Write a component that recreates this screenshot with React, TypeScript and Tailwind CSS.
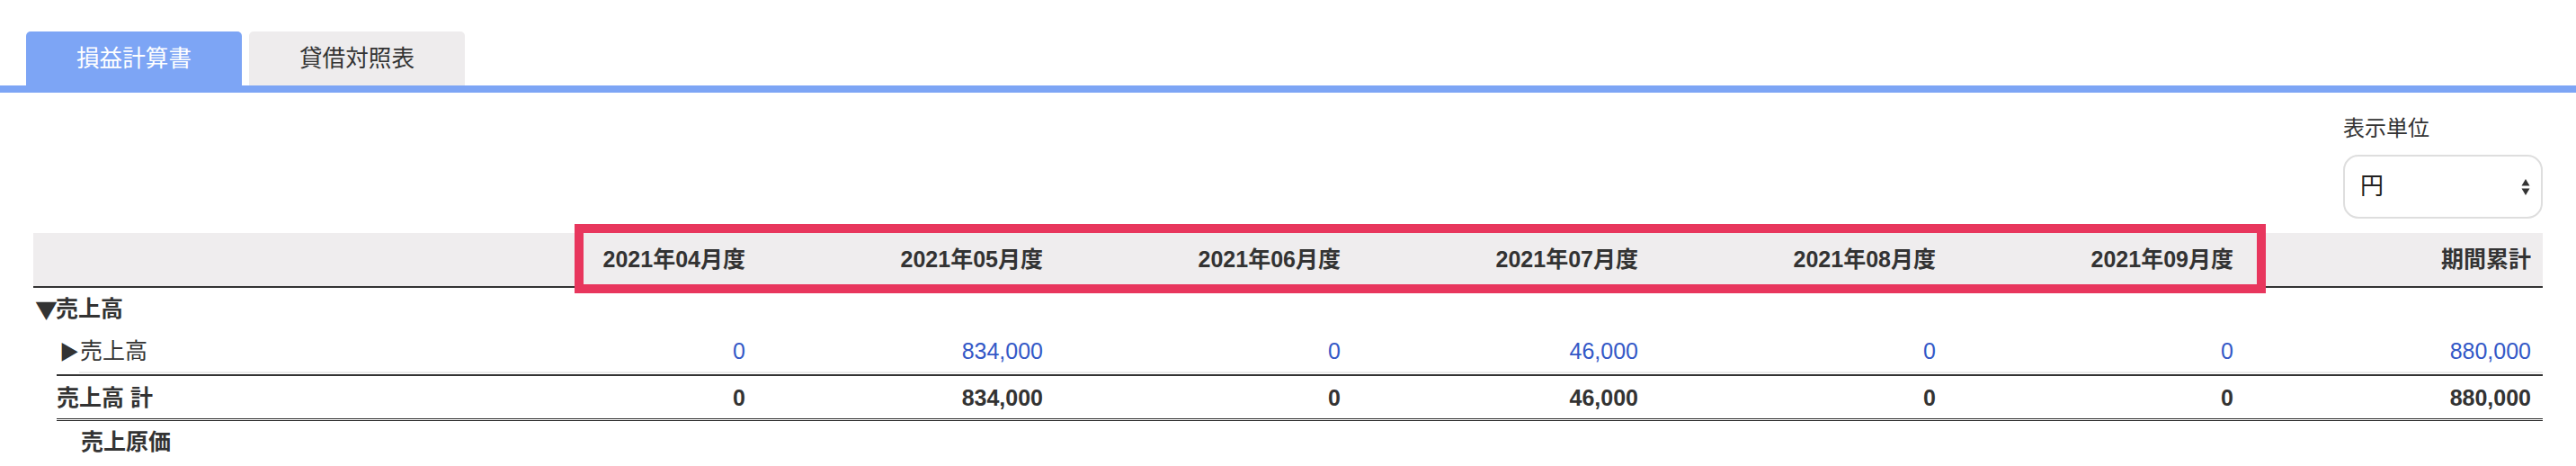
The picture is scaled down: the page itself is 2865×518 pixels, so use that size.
const months = ["2021年04月度", "2021年05月度", "2021年06月度", "2021年07月度", "2021年08月度", "2021年09月度"];
const sales = ["0", "834,000", "0", "46,000", "0", "0", "880,000"];

const font = "font-['Liberation_Sans','Noto_Sans_CJK_JP',sans-serif]";
const cjk = "font-['Noto_Sans_CJK_JP',sans-serif]";

function Cells({ values, className }: { values: string[]; className: string }) {
  return (
    <>
      {values.map((v, i) => (
        <div key={i} className={`pr-[13px] text-right ${className}`}>
          {v}
        </div>
      ))}
    </>
  );
}

function UnitSelect() {
  return (
    <div className="w-[222px]">
      <p className="text-[24px] leading-[30px] text-[#333]">表示単位</p>
      <div className="mt-[14px] flex h-[71px] items-center justify-between rounded-[17px] border-2 border-[#dedede] bg-white pl-[17px] pr-[12px]">
        <span className="text-[26px] text-[#222]">円</span>
        <svg width="10" height="20" viewBox="0 0 10 20" className="text-[#333]">
          <path d="M5 1 L9.5 8.5 H0.5 Z" fill="currentColor" />
          <path d="M5 19 L9.5 11.5 H0.5 Z" fill="currentColor" />
        </svg>
      </div>
    </div>
  );
}

export default function App() {
  return (
    <div className={`h-[518px] w-[2865px] overflow-hidden bg-white ${font}`}>
      {/* tabs */}
      <div className="flex gap-2 pl-[29px] pt-[35px]">
        <div className="flex h-[60px] w-[240px] items-center justify-center rounded-t-[5px] bg-[#7da5f5] text-[25.6px] text-white">
          損益計算書
        </div>
        <div className="flex h-[60px] w-[240px] items-center justify-center rounded-t-[5px] bg-[#eeeced] text-[25.6px] text-[#333]">
          貸借対照表
        </div>
      </div>
      <div className="h-2 bg-[#7da5f5]" />

      <div className="px-[37px]">
        <div className="mt-[25px] flex justify-end">
          <UnitSelect />
        </div>

        <div className="relative mt-4 text-[25px] text-[#333]">
          {/* header */}
          <div className="grid h-[61px] grid-cols-[474px_repeat(7,331px)] items-center border-b-2 border-[#333] bg-[#efedee] font-bold">
            <div />
            <Cells values={[...months, "期間累計"]} className="" />
          </div>
          {/* highlight frame */}
          <div className="pointer-events-none absolute left-[602px] top-[-10px] h-[77px] w-[1881px] border-[10px] border-[#e8365d]" />

          {/* 売上高 section */}
          <div className="flex h-[48px] items-center pl-[2px] font-bold">
            <span className={`${cjk} -mr-[2px]`}>▼</span>売上高
          </div>

          <div className="ml-[26px] grid h-[45px] grid-cols-[448px_repeat(7,331px)] items-center">
            <div className="pl-[3px]">
              <span className={`${cjk} inline-block w-[23px] text-[22px]`}>▶</span>売上高
            </div>
            <Cells values={sales} className="text-[#3358c7]" />
          </div>
          <div className="ml-[51px] h-[2px] bg-[#ebebeb]" />

          <div className="ml-[26px] mt-[1px] grid h-[51px] grid-cols-[448px_repeat(7,331px)] items-center border-t-2 border-[#333] font-bold">
            <div>売上高 計</div>
            <Cells values={sales} className="" />
          </div>
          <div className="ml-[26px] -mt-[2px] h-[3px] border-y border-[#2a2a2a]" />

          <div className="flex h-[48px] items-center pl-[53px] font-bold">売上原価</div>
        </div>
      </div>
    </div>
  );
}
